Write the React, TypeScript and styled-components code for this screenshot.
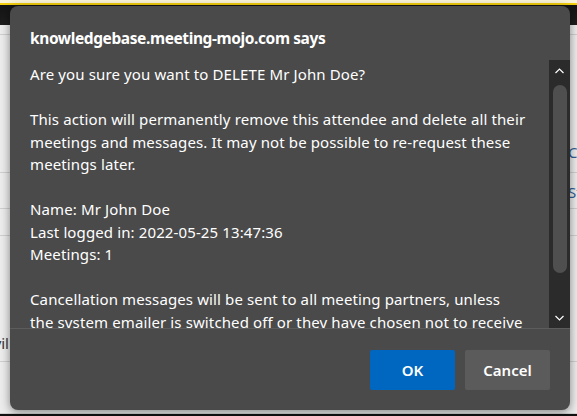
import styled, { createGlobalStyle } from 'styled-components';

const GlobalStyle = createGlobalStyle`
  html, body {
    margin: 0;
    padding: 0;
    overflow: hidden;
  }
  body {
    background-color: #ececec;
    font-family: "Noto Sans", "Open Sans", sans-serif;
  }
`

const Page = styled.div`
  position: relative;
  width: 577px;
  height: 416px;
  display: flex;
  flex-direction: column;
  overflow: hidden;
`

const NoticeBar = styled.div`
  height: 3px;
  background-color: #fbf3d6;
  border-bottom: 2px solid #f3cf0c;
`

const NavBar = styled.div`
  height: 24px;
  background: linear-gradient(#141414, #1e1e1e);
`

const Row = styled.div<{ $height: number }>`
  height: ${p => p.$height}px;
  flex-shrink: 0;
  display: flex;
  align-items: flex-end;
  justify-content: space-between;
  border-bottom: 1px solid #cfcfcf;
  background-color: #ececec;
  font-size: 15px;
  color: #333;
`

const EdgeText = styled.div<{ $side: 'left' | 'right'; $pad: number }>`
  width: 9px;
  overflow: hidden;
  display: flex;
  justify-content: ${p => (p.$side === 'left' ? 'flex-end' : 'flex-start')};
  white-space: nowrap;
  padding-bottom: ${p => p.$pad}px;
  color: ${p => (p.$side === 'right' ? '#2f5f96' : '#333')};
`

const PageBottom = styled.div`
  flex: 1;
  border-top: 2px solid #111;
  background-color: #fff;
`

const Dialog = styled.div`
  position: absolute;
  left: 10px;
  top: 6px;
  width: 560px;
  height: 404px;
  box-sizing: border-box;
  display: flex;
  flex-direction: column;
  background-color: #4a4a4a;
  border-radius: 8px;
  box-shadow: 0 2px 10px rgba(0, 0, 0, 0.45);
  color: #fff;
  overflow: hidden;
`

const Title = styled.div`
  padding: 20px 20px 0 20px;
  height: 24px;
  line-height: 24px;
  font-size: 15.5px;
  font-weight: 700;
  letter-spacing: -0.4px;
  white-space: nowrap;
`

const ScrollArea = styled.div`
  margin-top: 10px;
  height: 268px;
  display: flex;
  border-bottom: 1px solid #5c5c5c;
`

const Message = styled.div`
  flex: 1;
  overflow: hidden;
  padding: 3px 0 0 20px;
  font-size: 15px;
  line-height: 22.5px;
  letter-spacing: 0.12px;
  white-space: pre;
`

const Line = styled.div`
  min-height: 22.5px;
`

const Track = styled.div`
  width: 21px;
  display: flex;
  flex-direction: column;
  align-items: center;
  background-color: #2b2b2b;
`

const Arrow = styled.div`
  height: 21px;
  width: 100%;
  display: flex;
  align-items: center;
  justify-content: center;
`

const Thumb = styled.div`
  width: 14px;
  height: 188px;
  margin-top: 4px;
  margin-left: 1px;
  border-radius: 7px;
  background-color: #4f4f4f;
`

const Footer = styled.div`
  display: flex;
  justify-content: flex-end;
  gap: 10px;
  padding: 21px 20px 20px 0;
`

const Button = styled.button<{ $primary?: boolean }>`
  width: 85px;
  height: 40px;
  border: none;
  border-radius: 2px;
  font-family: inherit;
  font-size: 15px;
  font-weight: 600;
  color: #fff;
  background-color: ${p => (p.$primary ? '#0067c0' : '#5b5b5b')};
`

const Chevron = ({ down }: { down?: boolean }) => (
  <svg width="9" height="6" viewBox="0 0 9 6">
    <path
      d={down ? 'M0.5 1 L4.5 5 L8.5 1' : 'M0.5 5 L4.5 1 L8.5 5'}
      fill="none"
      stroke="#fff"
      strokeWidth="1.2"
    />
  </svg>
)

const lines = [
  'Are you sure you want to DELETE Mr John Doe?',
  '',
  'This action will permanently remove this attendee and delete all their',
  'meetings and messages. It may not be possible to re-request these',
  'meetings later.',
  '',
  'Name: Mr John Doe',
  'Last logged in: 2022-05-25 13:47:36',
  'Meetings: 1',
  '',
  'Cancellation messages will be sent to all meeting partners, unless',
  'the system emailer is switched off or they have chosen not to receive',
  'them.',
]

export default function App() {
  return (
    <>
      <GlobalStyle />
      <Page>
        <NoticeBar />
        <NavBar />
        <Row $height={9} />
        <Row $height={137}>
          <span />
          <EdgeText $side="right" $pad={10}>Contacts</EdgeText>
        </Row>
        <Row $height={35}>
          <span />
          <EdgeText $side="right" $pad={6}>Status</EdgeText>
        </Row>
        <Row $height={26} />
        <Row $height={125}>
          <EdgeText $side="left" $pad={8}>Civil</EdgeText>
        </Row>
        <Row $height={51} />
        <PageBottom />

        <Dialog role="alertdialog">
          <Title>knowledgebase.meeting-mojo.com says</Title>
          <ScrollArea>
            <Message>
              {lines.map((text, i) => (
                <Line key={i}>{text}</Line>
              ))}
            </Message>
            <Track>
              <Arrow><Chevron /></Arrow>
              <Thumb />
              <Arrow style={{ marginTop: 'auto' }}><Chevron down /></Arrow>
            </Track>
          </ScrollArea>
          <Footer>
            <Button $primary>OK</Button>
            <Button>Cancel</Button>
          </Footer>
        </Dialog>
      </Page>
    </>
  )
}
